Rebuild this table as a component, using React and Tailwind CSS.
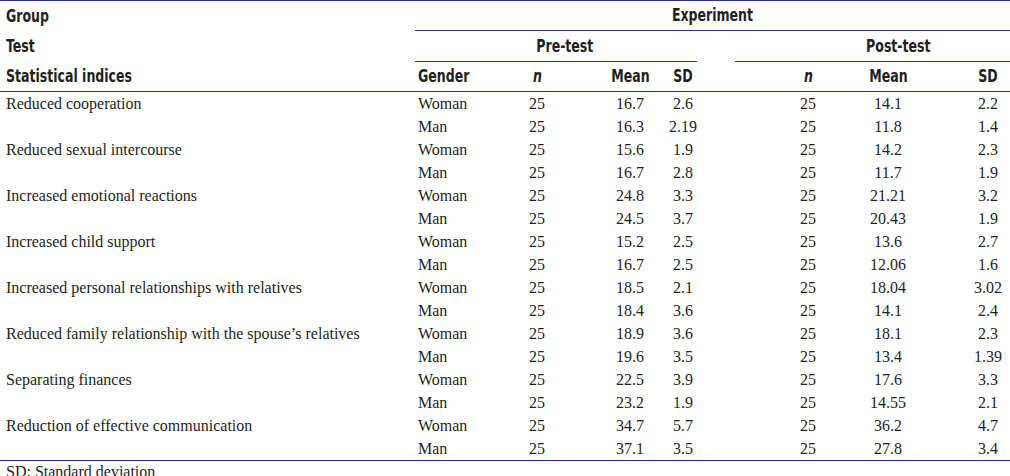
const ROWS = [
  ['Reduced cooperation', [['Woman', '25', '16.7', '2.6', '25', '14.1', '2.2'], ['Man', '25', '16.3', '2.19', '25', '11.8', '1.4']]],
  ['Reduced sexual intercourse', [['Woman', '25', '15.6', '1.9', '25', '14.2', '2.3'], ['Man', '25', '16.7', '2.8', '25', '11.7', '1.9']]],
  ['Increased emotional reactions', [['Woman', '25', '24.8', '3.3', '25', '21.21', '3.2'], ['Man', '25', '24.5', '3.7', '25', '20.43', '1.9']]],
  ['Increased child support', [['Woman', '25', '15.2', '2.5', '25', '13.6', '2.7'], ['Man', '25', '16.7', '2.5', '25', '12.06', '1.6']]],
  ['Increased personal relationships with relatives', [['Woman', '25', '18.5', '2.1', '25', '18.04', '3.02'], ['Man', '25', '18.4', '3.6', '25', '14.1', '2.4']]],
  ['Reduced family relationship with the spouse\u2019s relatives', [['Woman', '25', '18.9', '3.6', '25', '18.1', '2.3'], ['Man', '25', '19.6', '3.5', '25', '13.4', '1.39']]],
  ['Separating finances', [['Woman', '25', '22.5', '3.9', '25', '17.6', '3.3'], ['Man', '25', '23.2', '1.9', '25', '14.55', '2.1']]],
  ['Reduction of effective communication', [['Woman', '25', '34.7', '5.7', '25', '36.2', '4.7'], ['Man', '25', '37.1', '3.5', '25', '27.8', '3.4']]],
]

// label | gender | n | gap | mean | sd | gap | n | mean | gap | sd
const GRID = 'grid grid-cols-[413px_78px_92px_21px_52px_54px_50px_96px_64px_46px_44px]'

// condensed bold heading text (no narrow face installed, so squeeze DejaVu Condensed)
function H({ children, left, italic }) {
  return (
    <span
      className={`inline-block whitespace-nowrap font-['DejaVu_Sans_Condensed','DejaVu_Sans',sans-serif] font-bold text-[17px] text-[#231f20] scale-x-[0.82] ${left ? 'origin-left' : 'origin-center'} ${italic ? 'italic' : ''}`}
    >
      {children}
    </span>
  )
}

function DataRow({ label, cells }) {
  const [gender, n1, m1, sd1, n2, m2, sd2] = cells
  return (
    <div className={`${GRID} h-[23px] items-center whitespace-nowrap`}>
      <div className="pl-[6px]">{label}</div>
      <div className="pl-[5px]">{gender}</div>
      <div className="text-center">{n1}</div>
      <div />
      <div className="text-center">{m1}</div>
      <div className="text-center">{sd1}</div>
      <div />
      <div className="text-center">{n2}</div>
      <div className="text-center">{m2}</div>
      <div />
      <div className="text-center">{sd2}</div>
    </div>
  )
}

export default function App() {
  return (
    <div className="w-[1010px] h-[476px] bg-white overflow-hidden font-['Liberation_Serif',serif] text-[16px] leading-none text-[#231f20]">
      <div className="border-t border-[#2b3380]">
        <div className={`${GRID} h-[30px] items-center`}>
          <div className="pl-[6px]"><H left>Group</H></div>
          <div className="col-span-10 h-full flex items-center justify-center border-b border-[#2b3380] ml-[2px]">
            <H>Experiment</H>
          </div>
        </div>
        <div className={`${GRID} h-[31px] items-center`}>
          <div className="pl-[6px]"><H left>Test</H></div>
          <div className="col-span-5 h-full flex items-center justify-center border-b border-[#2b3380] ml-[2px] mr-[13px] pl-[18px]">
            <H>Pre-test</H>
          </div>
          <div />
          <div className="col-span-4 h-full flex items-center justify-center border-b border-[#2b3380] -ml-[25px] pl-[52px]">
            <H>Post-test</H>
          </div>
        </div>
        <div className={`${GRID} h-[30px] items-center border-b border-[#2b3380]`}>
          <div className="pl-[6px]"><H left>Statistical indices</H></div>
          <div className="pl-[5px]"><H left>Gender</H></div>
          <div className="text-center"><H italic>n</H></div>
          <div />
          <div className="text-center"><H>Mean</H></div>
          <div className="text-center"><H>SD</H></div>
          <div />
          <div className="text-center"><H italic>n</H></div>
          <div className="text-center"><H>Mean</H></div>
          <div />
          <div className="text-center"><H>SD</H></div>
        </div>
        <div className="border-b border-[#2b3380]">
          {ROWS.map(([label, pair]) => (
            <div key={label}>
              <DataRow label={label} cells={pair[0]} />
              <DataRow label="" cells={pair[1]} />
            </div>
          ))}
        </div>
        <div className="pl-[6px] pt-[3px]">SD: Standard deviation</div>
      </div>
    </div>
  )
}
